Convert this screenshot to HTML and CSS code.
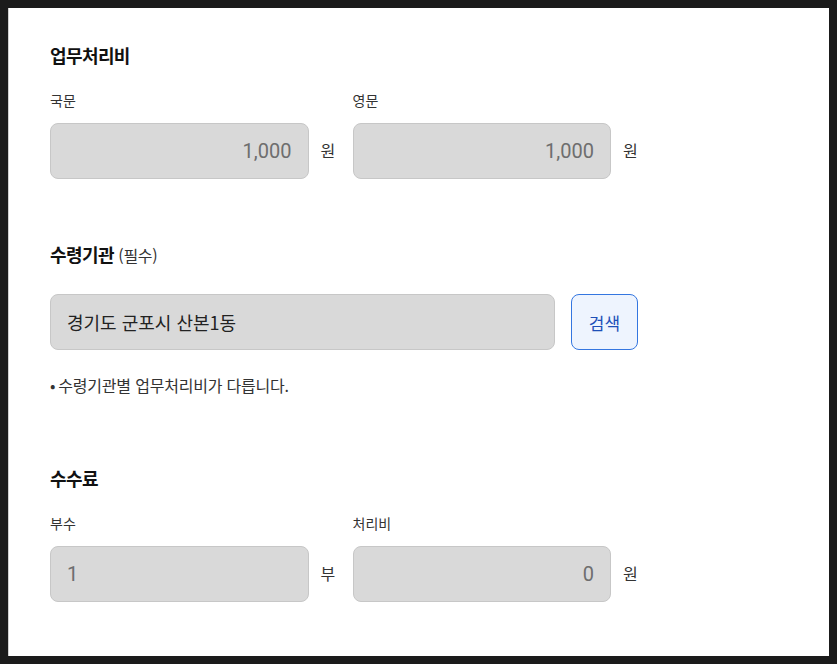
FILE: index.html
```html
<!DOCTYPE html>
<html lang="ko">
<head>
	<meta charset="UTF-8">
	<title>업무처리비</title>
	<link rel="stylesheet" href="styles.css">
</head>
<body>
	<div class="panel">
		<section class="section fee">
			<h2 class="title">업무처리비</h2>
			<div class="row">
				<div class="field">
					<label class="label">국문</label>
					<div class="line">
						<input class="input num" type="text" value="1,000" readonly>
						<span class="unit">원</span>
					</div>
				</div>
				<div class="field">
					<label class="label">영문</label>
					<div class="line">
						<input class="input num" type="text" value="1,000" readonly>
						<span class="unit">원</span>
					</div>
				</div>
			</div>
		</section>

		<section class="section org">
			<h2 class="title">수령기관 <small>(필수)</small></h2>
			<div class="search">
				<input class="input addr" type="text" value="경기도 군포시 산본1동" readonly>
				<button class="btn" type="button">검색</button>
			</div>
			<p class="note"><span class="dot">•</span>수령기관별 업무처리비가 다릅니다.</p>
		</section>

		<section class="section">
			<h2 class="title">수수료</h2>
			<div class="row">
				<div class="field">
					<label class="label">부수</label>
					<div class="line">
						<input class="input" type="text" value="1" readonly>
						<span class="unit">부</span>
					</div>
				</div>
				<div class="field">
					<label class="label">처리비</label>
					<div class="line">
						<input class="input num" type="text" value="0" readonly>
						<span class="unit">원</span>
					</div>
				</div>
			</div>
		</section>
	</div>
</body>
</html>
```

FILE: styles.css
```css
html, body {
	margin: 0;
	padding: 0;
	height: 100%;
}

body {
	background-color: #1b1b1b;
	padding: 8px;
	box-sizing: border-box;
	font-family: "Noto Sans CJK KR", "Noto Sans", sans-serif;
	color: #222;
}

.panel {
	background-color: #fff;
	border-left: 1px solid #d0d0d0;
	height: 100%;
	box-sizing: border-box;
	padding: 34px 0 0 41px;
	width: 821px;
	overflow: hidden;
}

.section {
	width: 588px;
	margin-bottom: 66px;
}

.section.fee {
	margin-bottom: 62px;
}

.section.org {
	margin-bottom: 69px;
}

.title {
	margin: 0;
	font-size: 18px;
	font-weight: 700;
	letter-spacing: -0.6px;
	line-height: 26px;
	color: #111;
}

.title small {
	font-size: 16px;
	font-weight: 400;
	letter-spacing: -0.3px;
	color: #333;
}

.row {
	display: flex;
	gap: 17px;
	margin-top: 22px;
}

.field {
	flex: 1;
	min-width: 0;
}

.label {
	display: block;
	font-size: 14px;
	line-height: 20px;
	color: #333;
	margin-bottom: 13px;
}

.line {
	display: flex;
	align-items: center;
}

.input {
	flex: 1;
	width: 0;
	min-width: 0;
	height: 56px;
	box-sizing: border-box;
	background-color: #d9d9d9;
	border: 1px solid #c7c7c7;
	border-radius: 8px;
	padding: 0 16px;
	font-family: Roboto, "Noto Sans CJK KR", sans-serif;
	font-size: 20px;
	color: #6e6e6e;
	outline: none;
}

.input.num {
	text-align: right;
}

.unit {
	margin-left: 12px;
	font-size: 16px;
	line-height: 20px;
	margin-bottom: 3px;
	color: #333;
	width: 15px;
}

.search {
	display: flex;
	gap: 16px;
	margin-top: 26px;
}

.input.addr {
	font-family: "Noto Sans CJK KR", sans-serif;
	font-size: 18px;
	color: #222;
}

.btn {
	width: 67px;
	height: 56px;
	box-sizing: border-box;
	background-color: #eef4fe;
	border: 1px solid #3476e0;
	border-radius: 8px;
	font-family: "Noto Sans CJK KR", sans-serif;
	font-size: 17px;
	color: #1d4fb8;
	cursor: pointer;
}

.note {
	margin: 24px 0 0;
	font-size: 16px;
	line-height: 22px;
	color: #333;
	letter-spacing: -0.2px;
}

.dot {
	margin-right: 3px;
}
```
